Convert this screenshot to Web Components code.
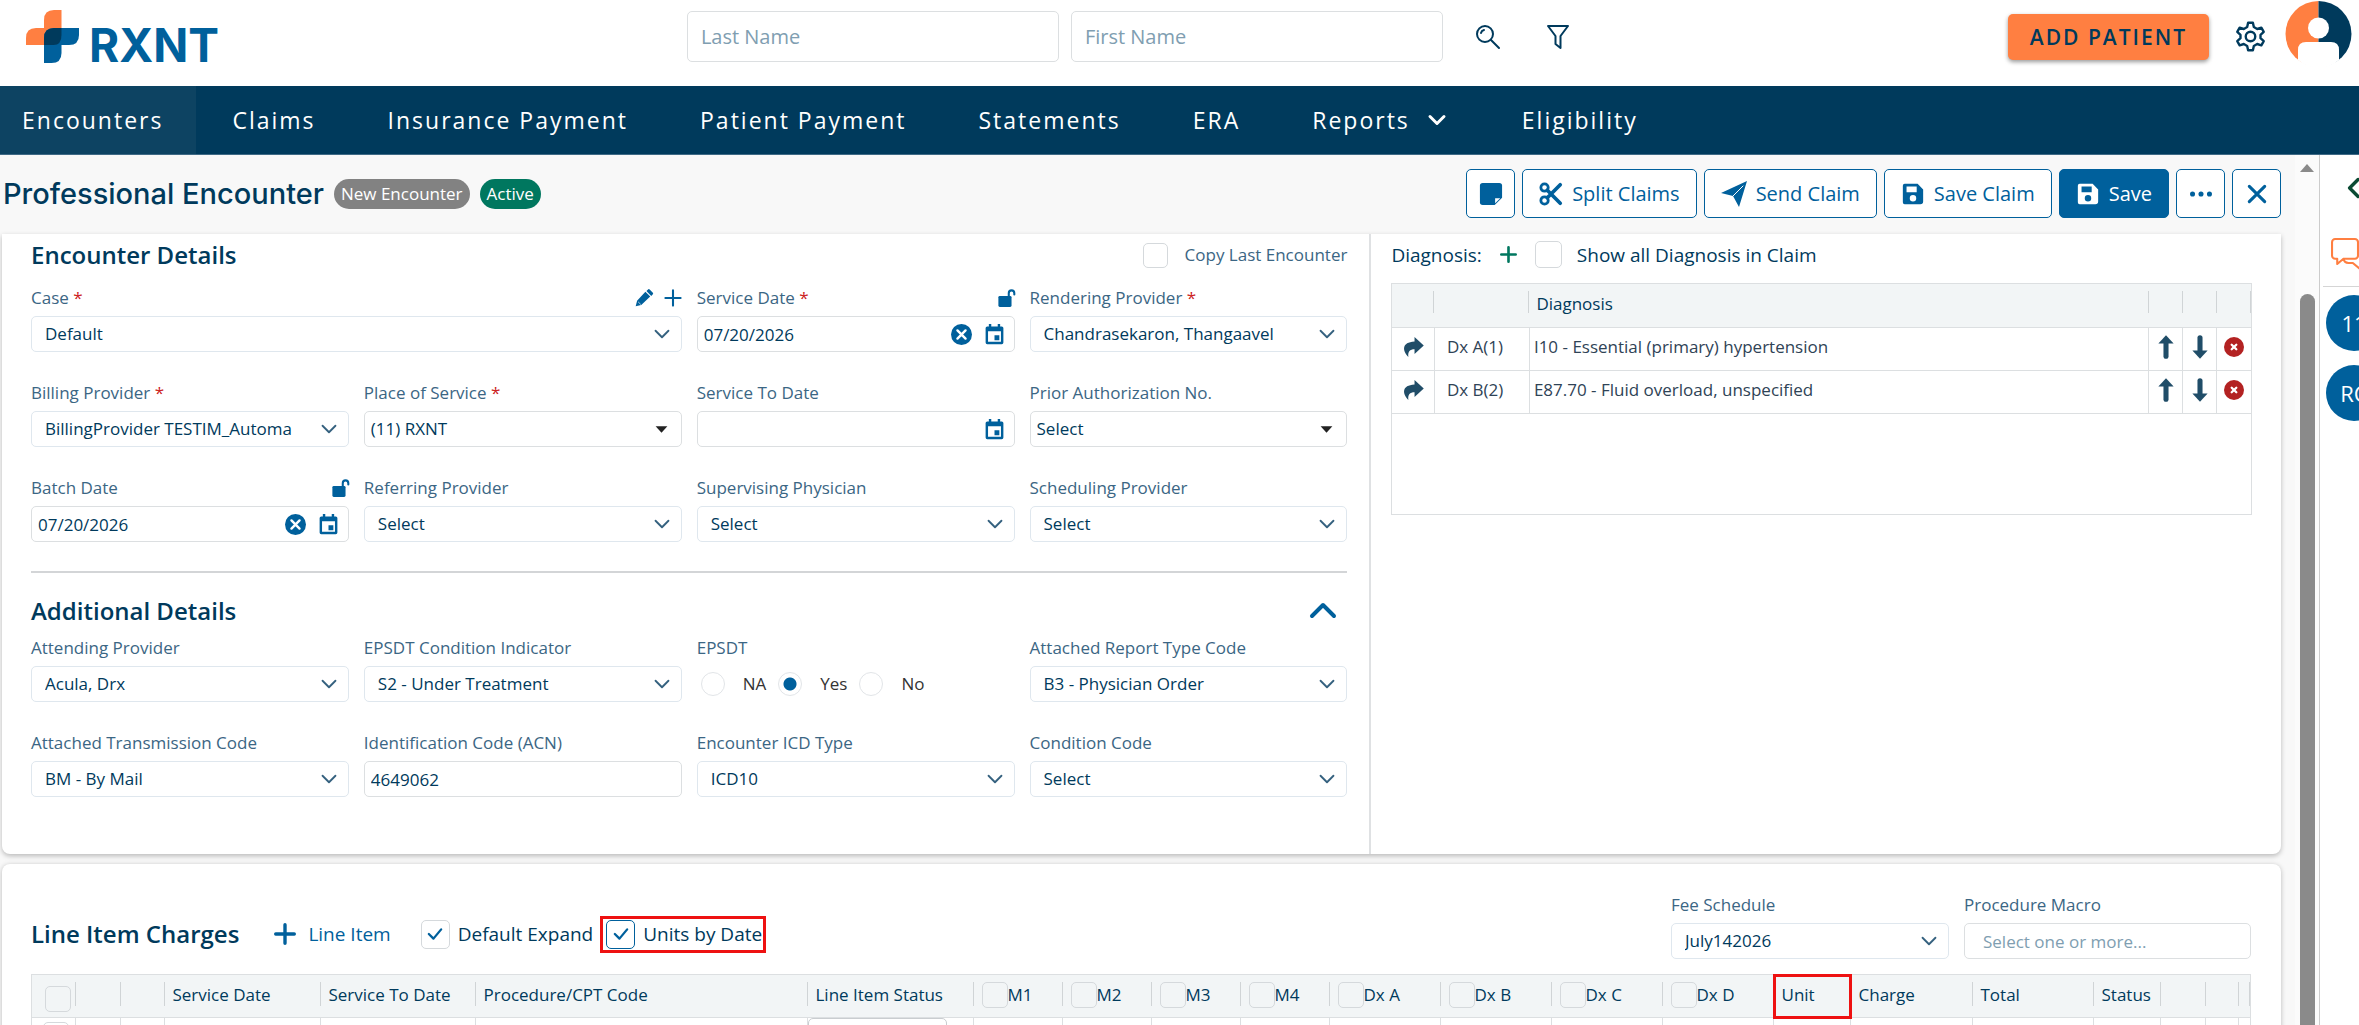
<!DOCTYPE html>
<html lang="en">
<head>
    <meta charset="UTF-8">
    <meta name="viewport" content="width=device-width, initial-scale=1.0">
    <title>RXNT - Professional Encounter</title>
    <style>
        :root {
            --navy: #003a5c;
            --blue: #00609c;
            --orange: #ff7f41;
            --label: #3b6684;
            --muted: #809eb1;
            --line: #dcdfe1;
            --red: #b32222;
            --green: #00775f;
        }

        * {
            box-sizing: border-box;
        }

        body {
            margin: 0;
            height: 100vh;
            overflow: hidden;
            display: flex;
            flex-direction: column;
            font-family: "Open Sans", "Noto Sans", sans-serif;
            font-size: 17px;
            line-height: 24px;
            color: var(--navy);
            background: #f8f8f8;
        }

        main {
            flex: 1;
            min-height: 0;
            display: flex;
        }

        .content {
            flex: 1;
            min-width: 0;
            overflow: hidden;
            padding: 0 14px 0 2px;
        }
    </style>
</head>
<body>
    <rx-header></rx-header>
    <rx-nav></rx-nav>
    <main>
        <div class="content">
            <rx-toolbar></rx-toolbar>
            <rx-encounter></rx-encounter>
            <rx-charges></rx-charges>
        </div>
        <rx-scrollbar></rx-scrollbar>
        <rx-side-panel></rx-side-panel>
    </main>

    <script>
        const ICONS = {
            search: '<circle cx="10" cy="10" r="8"/><path d="M16 16l8 8M6 9a4 4 0 0 1 3-3"/>',
            filter: '<path d="M3 2h20l-7.500 10v12l-5-4v-8z"/>',
            gear: '<circle cx="13" cy="13" r="4"/><path d="M11 1.500h4l.8 3.600 2.800 1.600 3.500-1.100 2 3.500-2.700 2.500v2.800l2.700 2.500-2 3.500-3.500-1.100-2.800 1.600-.8 3.600h-4l-.8-3.600-2.800-1.600-3.500 1.100-2-3.500 2.700-2.500v-2.800l-2.700-2.500 2-3.500 3.500 1.100 2.800-1.600z"/>',
            down: '<path d="M6 9.500l7 7 7-7"/>',
            up: '<path d="M2 18l11-11 11 11"/>',
            left: '<path d="M19 3L9 13l10 10"/>',
            plus: '<path d="M13 2v22M2 13h22"/>',
            close: '<path d="M3 3l20 20M23 3L3 23"/>',
            check: '<path d="M5 13l6 6L21 7"/>',
            caret: '<path d="M4 8h18l-9 10z" fill="currentColor" stroke="none"/>',
            note: '<path d="M4 1h18a3 3 0 0 1 3 3v13l-8 8H4a3 3 0 0 1-3-3V4a3 3 0 0 1 3-3z" fill="currentColor" stroke="none"/><path d="M17.500 23v-5.500H23z" fill="#fff" stroke="none"/>',
            scissors: '<circle cx="6" cy="6" r="4"/><circle cx="6" cy="20" r="4"/><path d="M9 9l14 14M9 17L23 3" stroke-width="4"/>',
            send: '<path d="M26 0L0 12l12 3 6 11z" fill="currentColor" stroke="none"/><path d="M22 5L12 15" stroke="#fff" stroke-width="1"/>',
            save: '<path d="M4 2h14l6 6v13a3 3 0 0 1-3 3H4a2 2 0 0 1-2-2V4a2 2 0 0 1 2-2zM6 5v6h11V5zM13 14a3.500 3.500 0 1 0 0 7 3.500 3.500 0 0 0 0-7z" fill="currentColor" fill-rule="evenodd" stroke="none"/>',
            dots: '<g fill="currentColor" stroke="none"><circle cx="3" cy="13" r="3"/><circle cx="13" cy="13" r="3"/><circle cx="23" cy="13" r="3"/></g>',
            pencil: '<path d="M1 25l2-8L15 4l7 7L9 23zM16.500 3l2-2a2 2 0 0 1 3 0l4 4a2 2 0 0 1 0 3l-2 2z" fill="currentColor" stroke="none"/><path d="M5 19l3 3" stroke="#fff" stroke-width="1"/>',
            unlock: '<rect x="2" y="10" width="19" height="16" rx="2" fill="currentColor" stroke="none"/><path d="M17 11V6a4 4 0 0 1 8 0v2" stroke-width="3"/>',
            calendar: '<path d="M6 0h3v3h8V0h3v3h2a2 2 0 0 1 2 2v18a2 2 0 0 1-2 2H4a2 2 0 0 1-2-2V5a2 2 0 0 1 2-2h2zM5 9v13h16V9zM13 14h6v6h-6z" fill="currentColor" fill-rule="evenodd" stroke="none"/>',
            clear: '<circle cx="13" cy="13" r="13" fill="currentColor" stroke="none"/><path d="M8 8l10 10M18 8L8 18" stroke="#fff" stroke-width="3"/>',
            remove: '<circle cx="13" cy="13" r="13" fill="currentColor" stroke="none"/><path d="M10 10l6 6M16 10l-6 6" stroke="#fff" stroke-width="3"/>',
            share: '<path d="M15 0l12 11-12 11v-6c-6 0-9 3-8 10C-1 18-2 7 15 6z" fill="currentColor" stroke="none"/>',
            arrowUp: '<path d="M13 24V6" stroke-width="6"/><path d="M13-1l9 10H4z" fill="currentColor" stroke="none"/>',
            arrowDown: '<path d="M13 2v18" stroke-width="6"/><path d="M13 27l9-10H4z" fill="currentColor" stroke="none"/>',
            chat: '<path d="M4 1h19a3 3 0 0 1 3 3v13a3 3 0 0 1-3 3H12l-6 5v-5H4a3 3 0 0 1-3-3V4a3 3 0 0 1 3-3zM12 20a5 5 0 0 0 5 4h4l7 6v-6"/>'
        };

        // Small helper: every element renders its own template into an open root.
        class RxElement extends HTMLElement {
            connectedCallback() {
                if (this.shadowRoot) return;
                this.attachShadow({ mode: 'open' });
                this.shadowRoot.innerHTML = `
                    <style>
                        *, :host { box-sizing: border-box; }
                        button, input, select { font: inherit; color: inherit; margin: 0; }
                        button { cursor: pointer; background: none; border: 0; padding: 0; }
                        button > rx-icon { display: block; }
                        input::placeholder { color: var(--muted); opacity: 1; }
                        h1, h2 { margin: 0; }
                    </style>
                    ${this.render()}
                `;
            }

            attr(name, fallback = '') {
                return this.getAttribute(name) || fallback;
            }
        }

        class RxIcon extends RxElement {
            render() {
                const size = this.attr('size', '20');
                return `
                    <style>
                        :host { display: inline-flex; flex: none; }
                        svg { display: block; overflow: visible; }
                    </style>
                    <svg width="${size}" height="${size}" viewBox="0 0 26 26" fill="none" stroke="currentColor"
                        stroke-width="${this.attr('weight', '2')}" stroke-linecap="round" stroke-linejoin="round" aria-hidden="true">${ICONS[this.attr('name')]}</svg>
                `;
            }
        }

        class RxHeader extends RxElement {
            render() {
                return `
                    <style>
                        :host {
                            flex: none;
                            height: 86px;
                            display: grid;
                            grid-template-columns: 11fr auto 13fr;
                            background: #fff;
                            padding: 0 7px 0 26px;
                            font-size: 20px;
                        }
                        .logo { display: flex; align-items: flex-start; gap: 10px; padding-top: 10px; text-decoration: none; color: var(--blue); }
                        .logo span { font: 700 46px/53px Inter, sans-serif; padding-top: 9px; }
                        .search { display: flex; gap: 12px; padding-top: 11px; }
                        .search input {
                            width: 372px;
                            height: 51px;
                            padding: 0 13px;
                            border: 1px solid var(--line);
                            border-radius: 5px;
                            background: #fff;
                        }
                        .search button { display: grid; place-items: center; width: 26px; height: 51px; margin-left: 20px; }
                        .search button + button { margin-left: 32px; }
                        .account { display: flex; justify-content: flex-end; align-items: flex-start; }
                        .add {
                            height: 46px;
                            margin: 14px 26px 0 0;
                            padding: 0 22px;
                            background: var(--orange);
                            border-radius: 5px;
                            font-size: 21px;
                            font-weight: 600;
                            letter-spacing: 2px;
                            box-shadow: 0 2px 4px rgba(0, 0, 0, 0.4);
                        }
                        .gear { margin: 21px 19px 0 0; }
                    </style>
                    <a class="logo" href="#" aria-label="RXNT home">
                        <svg width="53" height="53" viewBox="0 0 53 53" aria-hidden="true">
                            <path d="M18 35V10Q18 0 28 0h7.500v35z" fill="#ff7f41"/>
                            <path d="M0 35V28Q0 18 10 18h18v17z" fill="#ff7f41"/>
                            <path d="M28 18h25v7q0 10-10 10H18v-7q0-10 10-10z" fill="#00609c"/>
                            <path d="M18 28h17.500v15q0 10-10 10H18z" fill="#00609c"/>
                            <path d="M28 18h7.500v7q0 10-8 10H18v-7q0-10 10-10z" fill="#003a5c"/>
                        </svg>
                        <span>RXNT</span>
                    </a>
                    <div class="search">
                        <input type="text" placeholder="Last Name" aria-label="Last Name">
                        <input type="text" placeholder="First Name" aria-label="First Name">
                        <button aria-label="Search"><rx-icon name="search" size="26"></rx-icon></button>
                        <button aria-label="Filter"><rx-icon name="filter" size="26"></rx-icon></button>
                    </div>
                    <div class="account">
                        <button class="add">ADD PATIENT</button>
                        <button class="gear" aria-label="Settings"><rx-icon name="gear" size="31"></rx-icon></button>
                        <svg width="67" height="68" viewBox="0 0 67 68" role="img" aria-label="Account">
                            <path d="M33.500 1a33 33 0 0 0 0 66z" fill="#ff7f41"/>
                            <path d="M33.500 1a33 33 0 0 1 0 66z" fill="#003a5c"/>
                            <circle cx="33.500" cy="28" r="10.500" fill="#fff"/>
                            <path d="M13 60V50q0-8 8-8h25q8 0 8 8v10q-9 8-20.500 8T13 60z" fill="#fff"/>
                        </svg>
                    </div>
                `;
            }
        }

        class RxNav extends RxElement {
            render() {
                const items = ['Encounters', 'Claims', 'Insurance Payment', 'Patient Payment', 'Statements', 'ERA', 'Reports', 'Eligibility'];
                return `
                    <style>
                        :host { display: block; flex: none; background: var(--navy); border-bottom: 1px solid #3f6a86; }
                        nav { display: flex; height: 68px; }
                        a {
                            display: flex;
                            align-items: center;
                            gap: 14px;
                            padding: 0 36px;
                            color: #fff;
                            font-size: 23px;
                            letter-spacing: 2px;
                            text-decoration: none;
                        }
                        a[aria-current] { background: #0d4362; padding: 0 33px 0 22px; }
                    </style>
                    <nav>
                        ${items.map((item, i) => `<a href="#"${i === 0 ? ' aria-current="page"' : ''}>${item}${item === 'Reports' ? '<rx-icon name="down" size="26" weight="3"></rx-icon>' : ''}</a>`).join('')}
                    </nav>
                `;
            }
        }

        class RxButton extends RxElement {
            render() {
                return `
                    <style>
                        :host { display: block; }
                        button {
                            display: flex;
                            align-items: center;
                            justify-content: center;
                            gap: 9px;
                            height: 49px;
                            min-width: 49px;
                            padding: 0 16px;
                            border: 1px solid var(--blue);
                            border-radius: 5px;
                            background: #fff;
                            color: var(--blue);
                            font-size: 20px;
                        }
                        :host([icon-only]) button { padding: 0; }
                        :host([primary]) button { background: var(--blue); color: #fff; font-weight: 500; }
                    </style>
                    <button aria-label="${this.attr('label', this.textContent.trim())}"><slot></slot></button>
                `;
            }
        }

        class RxToolbar extends RxElement {
            render() {
                return `
                    <style>
                        :host { display: flex; align-items: center; height: 79px; gap: 10px; padding: 0 0 2px 1px; }
                        h1 { font: 500 29px/36px Inter, sans-serif; }
                        .badge { border-radius: 15px; padding: 0 7px; line-height: 30px; color: #fff; background: #828282; }
                        .badge.active { background: var(--green); }
                        .actions { display: flex; gap: 7px; margin-left: auto; }
                    </style>
                    <h1>Professional Encounter</h1>
                    <span class="badge">New Encounter</span>
                    <span class="badge active">Active</span>
                    <div class="actions">
                        <rx-button icon-only label="Note"><rx-icon name="note" size="24"></rx-icon></rx-button>
                        <rx-button><rx-icon name="scissors" size="24" weight="3"></rx-icon>Split Claims</rx-button>
                        <rx-button><rx-icon name="send" size="26"></rx-icon>Send Claim</rx-button>
                        <rx-button><rx-icon name="save" size="24"></rx-icon>Save Claim</rx-button>
                        <rx-button primary><rx-icon name="save" size="24"></rx-icon>Save</rx-button>
                        <rx-button icon-only label="More"><rx-icon name="dots" size="22"></rx-icon></rx-button>
                        <rx-button icon-only label="Close"><rx-icon name="close" size="20" weight="4"></rx-icon></rx-button>
                    </div>
                `;
            }
        }

        // type: select (default), combo, text, date
        class RxField extends RxElement {
            render() {
                const type = this.attr('type', 'select');
                const value = this.attr('value');
                const tools = this.attr('tools').split(' ').filter(Boolean);
                const control = type === 'select' || type === 'combo'
                    ? `<select id="control"><option>${value}</option></select>`
                    : `<input id="control" type="text" value="${value}" placeholder="${this.attr('placeholder')}">`;
                const ends = {
                    select: '<rx-icon name="down" size="24"></rx-icon>',
                    combo: '<rx-icon name="caret" size="17"></rx-icon>',
                    date: `${value ? '<button aria-label="Clear date"><rx-icon name="clear" size="21"></rx-icon></button>' : ''}<button aria-label="Open calendar"><rx-icon name="calendar" size="21"></rx-icon></button>`
                };
                return `
                    <style>
                        :host { display: block; min-width: 0; }
                        .top { display: flex; align-items: center; height: 24px; margin-bottom: 6px; color: var(--label); }
                        .top label { flex: 1; }
                        .top b { color: #c22; font-weight: 400; }
                        .tools { display: flex; gap: 11px; color: var(--blue); }
                        .box { display: grid; grid-template-columns: 1fr auto; align-items: center; }
                        select, input {
                            grid-area: 1 / 1 / 2 / 3;
                            appearance: none;
                            width: 100%;
                            height: 36px;
                            padding: 0 6px;
                            border: 1px solid var(--line);
                            border-radius: 5px;
                            background: #fff;
                        }
                        .select select { padding: 0 52px 0 13px; border-color: #dfe7ee; }
                        .macro input { padding-left: 18px; }
                        .end { grid-area: 1 / 2; display: flex; gap: 12px; padding-right: 10px; }
                        .select .end { color: #35617f; padding-right: 8px; pointer-events: none; }
                        .combo .end { color: #222; padding-right: 12px; pointer-events: none; }
                        .date .end { color: var(--blue); }
                    </style>
                    <div class="top">
                        <label for="control">${this.attr('label')}${this.hasAttribute('required') ? ' <b>*</b>' : ''}</label>
                        <span class="tools">${tools.map(t => `<button aria-label="${t}"><rx-icon name="${t}" size="18" weight="3"></rx-icon></button>`).join('')}</span>
                    </div>
                    <div class="box ${type} ${this.hasAttribute('placeholder') ? 'macro' : ''}">
                        ${control}
                        <span class="end">${ends[type] || ''}</span>
                    </div>
                `;
            }
        }

        class RxCheck extends RxElement {
            render() {
                return `
                    <style>
                        :host { display: inline-block; vertical-align: top; }
                        label { display: flex; align-items: center; gap: var(--check-gap, 8px); }
                        .box { display: grid; place-items: center; }
                        .box > * { grid-area: 1 / 1; }
                        rx-icon { color: var(--blue); pointer-events: none; }
                        input {
                            appearance: none;
                            width: var(--check-size, 27px);
                            height: var(--check-size, 27px);
                            border: 1px solid #d5d9dc;
                            border-radius: 5px;
                            background: transparent;
                        }
                        :host([focused]) input { border-color: var(--blue); }
                    </style>
                    <label>
                        <span class="box">
                            <input type="checkbox" aria-label="${this.attr('label', this.textContent.trim() || 'Select')}"${this.hasAttribute('checked') ? ' checked' : ''}>
                            ${this.hasAttribute('checked') ? '<rx-icon name="check" size="20" weight="3"></rx-icon>' : ''}
                        </span>
                        <slot></slot>
                    </label>
                `;
            }
        }

        class RxRadios extends RxElement {
            render() {
                return `
                    <style>
                        :host { display: block; }
                        fieldset { margin: 0; padding: 0; border: 0; }
                        legend { padding: 0; margin-bottom: 6px; color: var(--label); }
                        .options { display: flex; align-items: center; gap: 12px; height: 36px; padding-left: 4px; color: #333; }
                        label { display: flex; align-items: center; gap: 18px; }
                        input {
                            appearance: none;
                            width: 24px;
                            height: 24px;
                            border: 1px solid #e2e5e8;
                            border-radius: 50%;
                        }
                        input:checked { background: radial-gradient(circle, var(--blue) 0 6px, transparent 7px); }
                    </style>
                    <fieldset>
                        <legend>EPSDT</legend>
                        <div class="options">
                            <label><input type="radio" name="epsdt">NA</label>
                            <label><input type="radio" name="epsdt" checked>Yes</label>
                            <label><input type="radio" name="epsdt">No</label>
                        </div>
                    </fieldset>
                `;
            }
        }

        class RxEncounter extends RxElement {
            render() {
                return `
                    <style>
                        :host {
                            display: grid;
                            grid-template-columns: 3fr 2fr;
                            background: #fff;
                            border-radius: 0 0 8px 8px;
                            box-shadow: 0 2px 5px rgba(0, 0, 0, 0.25);
                            margin-bottom: 10px;
                        }
                        .details { padding: 0 22px 57px 29px; }
                        .head { display: flex; align-items: center; justify-content: space-between; height: 42px; margin-bottom: 10px; color: var(--label); --check-gap: 17px; --check-size: 25px; }
                        h2 { font-size: 24px; font-weight: 600; line-height: 32px; color: var(--navy); }
                        .grid { display: grid; grid-template-columns: repeat(4, 1fr); gap: 29px 15px; }
                        .wide { grid-column: span 2; }
                        hr { height: 2px; border: 0; background: #d3d5d7; margin: 29px 0 18px; }
                        .head.more { height: 40px; margin-bottom: 5px; padding-right: 11px; }
                        .head button { color: var(--blue); }
                        .diagnosis { border-left: 2px solid #dfe1e3; padding: 0 29px 0 20px; }
                    </style>
                    <section class="details">
                        <div class="head"><h2>Encounter Details</h2><rx-check>Copy Last Encounter</rx-check></div>
                        <div class="grid">
                            <rx-field class="wide" label="Case" required value="Default" tools="pencil plus"></rx-field>
                            <rx-field label="Service Date" required type="date" value="07/20/2026" tools="unlock"></rx-field>
                            <rx-field label="Rendering Provider" required value="Chandrasekaron, Thangaavel"></rx-field>
                            <rx-field label="Billing Provider" required value="BillingProvider TESTIM_Automa"></rx-field>
                            <rx-field label="Place of Service" required type="combo" value="(11) RXNT"></rx-field>
                            <rx-field label="Service To Date" type="date"></rx-field>
                            <rx-field label="Prior Authorization No." type="combo" value="Select"></rx-field>
                            <rx-field label="Batch Date" type="date" value="07/20/2026" tools="unlock"></rx-field>
                            <rx-field label="Referring Provider" value="Select"></rx-field>
                            <rx-field label="Supervising Physician" value="Select"></rx-field>
                            <rx-field label="Scheduling Provider" value="Select"></rx-field>
                        </div>
                        <hr>
                        <div class="head more">
                            <h2>Additional Details</h2>
                            <button aria-label="Collapse"><rx-icon name="up" size="26" weight="4"></rx-icon></button>
                        </div>
                        <div class="grid">
                            <rx-field label="Attending Provider" value="Acula, Drx"></rx-field>
                            <rx-field label="EPSDT Condition Indicator" value="S2 - Under Treatment"></rx-field>
                            <rx-radios></rx-radios>
                            <rx-field label="Attached Report Type Code" value="B3 - Physician Order"></rx-field>
                            <rx-field label="Attached Transmission Code" value="BM - By Mail"></rx-field>
                            <rx-field label="Identification Code (ACN)" type="text" value="4649062"></rx-field>
                            <rx-field label="Encounter ICD Type" value="ICD10"></rx-field>
                            <rx-field label="Condition Code" value="Select"></rx-field>
                        </div>
                    </section>
                    <section class="diagnosis"><rx-diagnosis></rx-diagnosis></section>
                `;
            }
        }

        class RxDiagnosis extends RxElement {
            render() {
                const rows = [
                    ['Dx A(1)', 'I10 - Essential (primary) hypertension'],
                    ['Dx B(2)', 'E87.70 - Fluid overload, unspecified']
                ];
                return `
                    <style>
                        :host { display: block; }
                        .head { display: flex; align-items: center; gap: 18px; height: 41px; margin-bottom: 8px; font-size: 19px; --check-gap: 15px; }
                        .head button { color: var(--green); }
                        .frame { min-height: 232px; border: 1px solid var(--line); }
                        table { width: 100%; border-collapse: collapse; table-layout: fixed; }
                        th, td { height: 43px; padding: 0 4px 3px; text-align: left; font-weight: 400; border-bottom: 1px solid var(--line); }
                        th { background: linear-gradient(#d0d4d6, #d0d4d6) right 0 top 7px / 1px 22px no-repeat, #f2f5f6; padding-left: 7px; }
                        td { color: #2f4356; border-right: 1px solid var(--line); }
                        th:last-child, td:last-child { border-right: 0; }
                        .go { width: 42px; }
                        .dx { width: 95px; }
                        .act { width: 34px; }
                        td:nth-child(2) { padding-left: 12px; }
                        td button { display: grid; margin: auto; color: #204d68; }
                        td .remove { color: var(--red); }
                    </style>
                    <div class="head">
                        <span>Diagnosis:</span>
                        <button aria-label="Add diagnosis"><rx-icon name="plus" size="17" weight="4"></rx-icon></button>
                        <rx-check>Show all Diagnosis in Claim</rx-check>
                    </div>
                    <div class="frame">
                        <table>
                            <thead><tr><th class="go"></th><th class="dx"></th><th>Diagnosis</th><th class="act"></th><th class="act"></th><th class="act"></th></tr></thead>
                            <tbody>
                                ${rows.map(([dx, text]) => `<tr>
                                    <td><button aria-label="Apply"><rx-icon name="share" size="20"></rx-icon></button></td>
                                    <td>${dx}</td><td>${text}</td>
                                    <td><button aria-label="Move up"><rx-icon name="arrowUp" size="22"></rx-icon></button></td>
                                    <td><button aria-label="Move down"><rx-icon name="arrowDown" size="22"></rx-icon></button></td>
                                    <td><button class="remove" aria-label="Remove"><rx-icon name="remove" size="20"></rx-icon></button></td>
                                </tr>`).join('')}
                            </tbody>
                        </table>
                    </div>
                `;
            }
        }

        class RxCharges extends RxElement {
            render() {
                // [title, width, has checkbox]; the procedure column takes what is left
                const columns = [
                    ['', 44, true], ['', 45], ['', 44], ['Service Date', 156], ['Service To Date', 155],
                    ['Procedure/CPT Code', 0], ['Line Item Status', 166],
                    ['M1', 89, true], ['M2', 89, true], ['M3', 89, true], ['M4', 89, true],
                    ['Dx A', 111, true], ['Dx B', 111, true], ['Dx C', 111, true], ['Dx D', 111, true],
                    ['Unit', 77], ['Charge', 122], ['Total', 121], ['Status', 67], ['', 45], ['', 33], ['', 12]
                ];
                return `
                    <style>
                        :host {
                            display: block;
                            background: #fff;
                            border-radius: 8px;
                            box-shadow: 0 1px 5px rgba(0, 0, 0, 0.25);
                            padding: 29px 30px 40px 29px;
                        }
                        .bar { display: flex; align-items: flex-end; gap: 15px; margin-bottom: 15px; }
                        .left { flex: 1; display: flex; align-items: center; height: 50px; font-size: 19px; }
                        h2 { font-size: 24px; font-weight: 600; line-height: 32px; }
                        .add { display: flex; align-items: center; gap: 12px; margin: 0 30px 0 35px; color: var(--blue); }
                        .mark { border: 3px solid #ee1111; padding: 1px 1px 1px 3px; margin-left: 7px; }
                        .left rx-check { --check-size: 29px; }
                        .fee { width: 278px; }
                        .macro { width: 287px; }
                        table { width: 100%; border-collapse: collapse; table-layout: fixed; border: 1px solid var(--line); }
                        th {
                            height: 43px;
                            padding: 0 0 2px 8px;
                            text-align: left;
                            font-weight: 400;
                            white-space: nowrap;
                            border-bottom: 1px solid var(--line);
                            background: linear-gradient(#d0d4d6, #d0d4d6) right 0 top 7px / 1px 24px no-repeat, #f2f5f6;
                        }
                        th:first-child { padding: 6px 0 0 13px; }
                        th.unit { outline: 3px solid #ee1111; outline-offset: -2px; }
                        th, td { --check-size: 26px; --check-gap: 0px; }
                        td { height: 56px; padding: 4px 0 0 11px; border-right: 1px solid var(--line); vertical-align: top; }
                        td.status { padding: 0; }
                        select { appearance: none; width: 139px; height: 44px; border: 1px solid #c9cdd0; border-radius: 5px; background: #fff; }
                    </style>
                    <div class="bar">
                        <div class="left">
                            <h2>Line Item Charges</h2>
                            <button class="add"><rx-icon name="plus" size="22" weight="4"></rx-icon>Line Item</button>
                            <rx-check checked>Default Expand</rx-check>
                            <div class="mark"><rx-check checked focused>Units by Date</rx-check></div>
                        </div>
                        <rx-field class="fee" label="Fee Schedule" value="July142026"></rx-field>
                        <rx-field class="macro" label="Procedure Macro" type="text" placeholder="Select one or more..."></rx-field>
                    </div>
                    <table>
                        <colgroup>${columns.map(c => `<col${c[1] ? ` style="width: ${c[1]}px"` : ''}>`).join('')}</colgroup>
                        <thead><tr>${columns.map(([title, , check]) => `<th${title === 'Unit' ? ' class="unit"' : ''}>${check ? `<rx-check label="${title || 'Select all'}">${title}</rx-check>` : title}</th>`).join('')}</tr></thead>
                        <tbody><tr>${columns.map(([title], i) => {
                            if (i === 0) return '<td><rx-check></rx-check></td>';
                            if (title === 'Line Item Status') return '<td class="status"><select aria-label="Line Item Status"></select></td>';
                            return '<td></td>';
                        }).join('')}</tr></tbody>
                    </table>
                `;
            }
        }

        class RxScrollbar extends RxElement {
            render() {
                return `
                    <style>
                        :host { display: flex; flex-direction: column; align-items: center; width: 24px; padding: 9px 0 0; background: #fbfbfb; }
                        i { border: 7px solid transparent; border-top: 0; border-bottom: 8px solid #8a8a8a; }
                        b { flex: 1; width: 15px; margin-top: 122px; border-radius: 8px 8px 0 0; background: #8a8a8a; }
                    </style>
                    <i></i><b></b>
                `;
            }
        }

        class RxSidePanel extends RxElement {
            render() {
                return `
                    <style>
                        :host { display: block; width: 40px; overflow: hidden; background: #fff; border-left: 1px solid #ccc; }
                        .open { display: block; padding: 22px 0 0 22px; color: #0a4a33; }
                        .chat { display: block; padding: 39px 0 21px 11px; color: var(--orange); }
                        hr { margin: 0 0 8px 3px; border: 0; border-top: 1px solid #d5d5d5; }
                        .user {
                            display: block;
                            width: 56px;
                            height: 56px;
                            margin: 0 0 14px 6px;
                            border-radius: 50%;
                            background: var(--blue);
                            color: #fff;
                            font-size: 22px;
                        }
                    </style>
                    <button class="open" aria-label="Open panel"><rx-icon name="left" size="22" weight="4"></rx-icon></button>
                    <button class="chat" aria-label="Messages"><rx-icon name="chat" size="27"></rx-icon></button>
                    <hr>
                    <button class="user">11</button>
                    <button class="user">RC</button>
                `;
            }
        }

        customElements.define('rx-icon', RxIcon);
        customElements.define('rx-header', RxHeader);
        customElements.define('rx-nav', RxNav);
        customElements.define('rx-button', RxButton);
        customElements.define('rx-toolbar', RxToolbar);
        customElements.define('rx-field', RxField);
        customElements.define('rx-check', RxCheck);
        customElements.define('rx-radios', RxRadios);
        customElements.define('rx-encounter', RxEncounter);
        customElements.define('rx-diagnosis', RxDiagnosis);
        customElements.define('rx-charges', RxCharges);
        customElements.define('rx-scrollbar', RxScrollbar);
        customElements.define('rx-side-panel', RxSidePanel);
    </script>
</body>
</html>
